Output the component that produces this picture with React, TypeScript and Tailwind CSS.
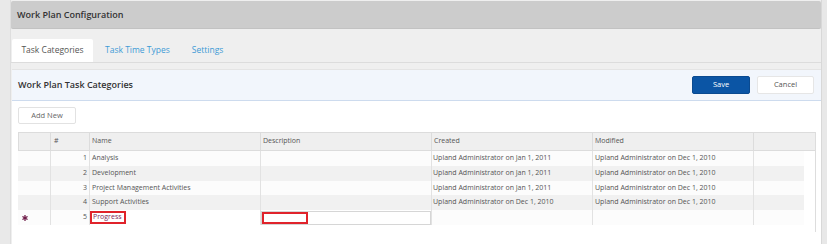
import React from "react";

const font = { fontFamily: '"Open Sans", "Liberation Sans", sans-serif' };

type Row = { n: number; name: string; created: string; modified: string; bg: string; h: string };

const rows: Row[] = [
  { n: 1, name: "Analysis", created: "Upland Administrator on Jan 1, 2011", modified: "Upland Administrator on Dec 1, 2010", bg: "bg-[#fcfcfc]", h: "h-[15px]" },
  { n: 2, name: "Development", created: "Upland Administrator on Jan 1, 2011", modified: "Upland Administrator on Dec 1, 2010", bg: "bg-[#f1f1f1]", h: "h-[15px]" },
  { n: 3, name: "Project Management Activities", created: "Upland Administrator on Jan 1, 2011", modified: "Upland Administrator on Dec 1, 2010", bg: "bg-[#fcfcfc]", h: "h-[14px]" },
  { n: 4, name: "Support Activities", created: "Upland Administrator on Dec 1, 2010", modified: "Upland Administrator on Dec 1, 2010", bg: "bg-[#f1f1f1]", h: "h-[15px]" },
];

export default function App() {
  return (
    <div
      className="w-[827px] h-[244px] overflow-hidden bg-[#efefef] flex"
      style={font}
    >
      <div className="w-[11px] shrink-0 bg-[#e9e9e9] border-r border-[#dedede]" />
      <div className="w-[810px] shrink-0 pt-[1px]">
        <div className="h-[28px] bg-[#cccccc] rounded-[2px] border-b border-[#c2c2c2] flex items-center pl-[6px] text-[9px] font-semibold text-[#333]">
          Work Plan Configuration
        </div>
        <div className="mt-[10px] h-[24px] flex items-stretch border-b border-[#dcdcdc] text-[8.5px]">
          <div className="w-[81px] ml-[1px] bg-white rounded-t-[2px] flex items-center justify-center text-[#555]">
            Task Categories
          </div>
          <div className="ml-[12px] flex items-center text-[#3e9bd6]">Task Time Types</div>
          <div className="ml-[22px] flex items-center text-[#3e9bd6]">Settings</div>
        </div>
        <div className="mt-[6px] ml-[1px] bg-white h-[200px] border-t border-[#e4e4e4]">
          <div className="h-[31px] bg-[#f2f6fc] border-b border-[#cddbee] flex items-center pl-[6px] pr-[7px]">
            <div className="text-[9px] font-semibold text-[#333] flex-1">Work Plan Task Categories</div>
            <button className="w-[58px] h-[18px] bg-[#0b55a5] rounded-[2px] border border-[#0a4a90] text-white text-[7.5px]">
              Save
            </button>
            <button className="ml-[7px] w-[57px] h-[18px] bg-white rounded-[2px] border border-[#e6e6e6] text-[#555] text-[7.5px]">
              Cancel
            </button>
          </div>
          <div className="flex pl-[6px] pt-[6px]">
            <button className="w-[58px] h-[17px] bg-white border border-[#e2e2e2] rounded-[2px] text-[#666] text-[7.5px]">
              Add New
            </button>
          </div>
          <div className="ml-[6px] mt-[8px] w-[798px] h-[100px] border-r border-[#dddddd]">
            <div className="flex h-[19px] bg-[#efefef] border-y border-[#dcdcdc] text-[7px] text-[#555]">
              <div className="w-[32px] border-l border-[#dcdcdc]" />
              <div className="w-[39px] border-l border-[#dcdcdc] pl-[3px] flex items-center">#</div>
              <div className="w-[171px] border-l border-[#dcdcdc] pl-[2px] flex items-center">Name</div>
              <div className="w-[171px] border-l border-[#dcdcdc] pl-[2px] flex items-center">Description</div>
              <div className="w-[161px] border-l border-[#dcdcdc] pl-[2px] flex items-center">Created</div>
              <div className="w-[161px] border-l border-[#dcdcdc] pl-[2px] flex items-center">Modified</div>
              <div className="w-[62px] border-l border-[#dcdcdc]" />
            </div>
            {rows.map((r) => (
              <div key={r.n} className={`flex ${r.h} ${r.bg} w-[786px] text-[7px] text-[#555]`}>
                <div className="w-[32px]" />
                <div className="w-[39px] border-l border-[#e2e2e2] pr-[2px] flex items-center justify-end">{r.n}</div>
                <div className="w-[171px] border-l border-[#e2e2e2] pl-[2px] flex items-center">{r.name}</div>
                <div className="w-[171px] border-l border-[#e2e2e2]" />
                <div className="w-[161px] border-l border-[#e2e2e2] pl-[1px] flex items-center">{r.created}</div>
                <div className="w-[161px] border-l border-[#e2e2e2] pl-[2px] flex items-center">{r.modified}</div>
                <div className="w-[51px] border-l border-[#e2e2e2]" />
              </div>
            ))}
            <div className="flex h-[15px] bg-[#fcfcfc] w-[786px] text-[7px] text-[#555]">
              <div className="w-[32px] flex items-center pl-[4px]">
                <svg width="6" height="6" viewBox="0 0 6 6">
                  <g stroke="#6e1a48" strokeWidth="1.3" strokeLinecap="round">
                    <line x1="3" y1="0.6" x2="3" y2="5.4" />
                    <line x1="0.9" y1="1.8" x2="5.1" y2="4.2" />
                    <line x1="0.9" y1="4.2" x2="5.1" y2="1.8" />
                  </g>
                </svg>
              </div>
              <div className="w-[39px] border-l border-[#e2e2e2] pr-[2px] flex items-center justify-end">5</div>
              <div className="w-[171px] border-l border-[#e2e2e2] flex items-center bg-white">
                <div className="h-[13px] w-[36px] border-2 border-[#e0232b] flex items-center pl-[1px] text-[#7d2a5a]">
                  Progress
                </div>
              </div>
              <div className="w-[171px] border-l border-[#e2e2e2] flex items-center bg-white">
                <div className="h-[14px] w-[170px] border border-[#d6d6d6] flex items-center">
                  <div className="h-[12px] w-[46px] border-2 border-[#e0232b] bg-white" />
                </div>
              </div>
              <div className="w-[161px] border-l border-[#e2e2e2]" />
              <div className="w-[161px] border-l border-[#e2e2e2]" />
              <div className="w-[51px] border-l border-[#e2e2e2]" />
            </div>
          </div>
        </div>
      </div>
      <div className="w-[6px] shrink-0 bg-[#e8e8e8] border-l border-[#d8d8d8]" />
    </div>
  );
}
